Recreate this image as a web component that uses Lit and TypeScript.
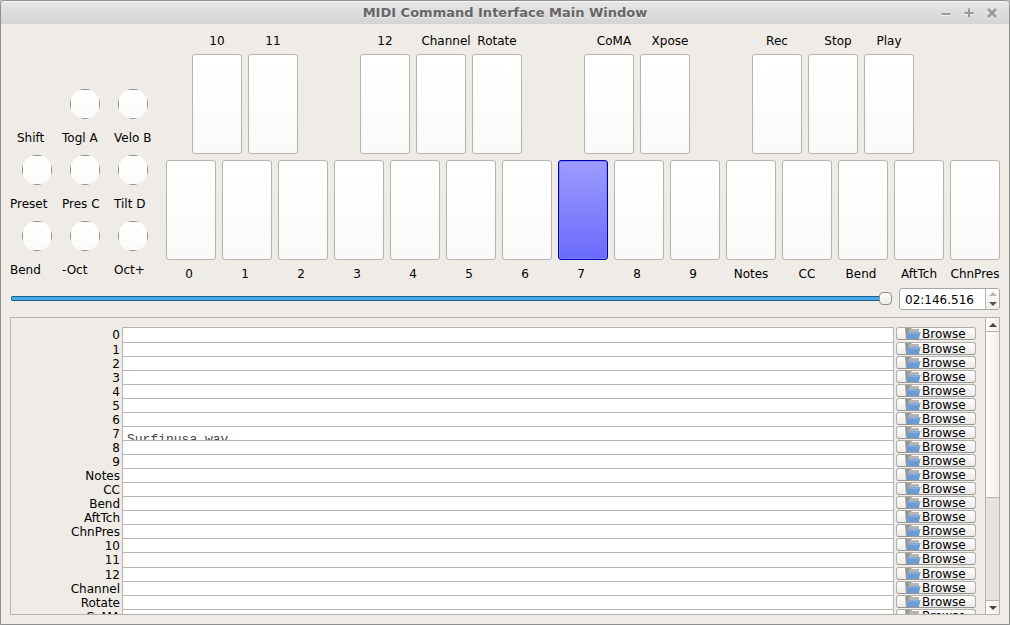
import { LitElement, html, svg, css } from "lit";
import { customElement, property, state } from "lit/decorators.js";
import { classMap } from "lit/directives/class-map.js";

interface Key {
  name: string;
  column: number;
  lean?: "left" | "right";
}

const UPPER_KEYS: Key[] = [
  { name: "10", column: 1 },
  { name: "11", column: 2 },
  { name: "12", column: 4 },
  { name: "Channel", column: 5, lean: "right" },
  { name: "Rotate", column: 6 },
  { name: "CoMA", column: 8, lean: "right" },
  { name: "Xpose", column: 9, lean: "right" },
  { name: "Rec", column: 11 },
  { name: "Stop", column: 12, lean: "right" },
  { name: "Play", column: 13 },
];

const LOWER_KEYS: Key[] = [
  ...["0", "1", "2", "3", "4", "5", "6", "7", "8", "9"].map(
    (name, i): Key => ({ name, column: i + 1, lean: "left" })
  ),
  { name: "Notes", column: 11 },
  { name: "CC", column: 12 },
  { name: "Bend", column: 13, lean: "left" },
  { name: "AftTch", column: 14 },
  { name: "ChnPres", column: 15 },
];

const PADS = [
  ["Shift", "Togl A", "Velo B"],
  ["Preset", "Pres C", "Tilt D"],
  ["Bend", "-Oct", "Oct+"],
];

const FILE_ROWS = [...LOWER_KEYS, ...UPPER_KEYS].map((k) => k.name);

const base = css`
  * {
    box-sizing: border-box;
  }
  button,
  input {
    margin: 0;
    padding: 0;
    font: inherit;
    color: inherit;
  }
`;

@customElement("title-bar")
export class TitleBar extends LitElement {
  static styles = [
    base,
    css`
      :host {
        display: grid;
        grid-template-columns: 1fr auto 1fr;
        align-items: center;
        height: 23px;
        border-top: 1px solid #fafafa;
        border-radius: 4px 4px 0 0;
        background: linear-gradient(#e6e6e6, #d4d4d4);
      }
      h1 {
        grid-column: 2;
        margin: 0;
        font-size: 13px;
        line-height: 16px;
        color: #666;
        text-shadow: 0 1px #f4f4f4;
      }
      .controls {
        display: flex;
        justify-content: flex-end;
        gap: 11px;
        padding-right: 11px;
      }
      button {
        width: 12px;
        height: 12px;
        border: 0;
        background: none;
      }
      svg {
        display: block;
        filter: drop-shadow(0 1px #f2f2f2);
      }
      path {
        fill: none;
        stroke: #999;
        stroke-width: 2;
      }
      .close path {
        stroke-width: 2.5;
      }
    `,
  ];

  render() {
    return html`
      <h1>MIDI Command Interface Main Window</h1>
      <div class="controls">
        <button aria-label="Minimize">
          <svg width="12" height="12"><path d="M1.500 7h9" /></svg>
        </button>
        <button aria-label="Maximize">
          <svg width="12" height="12"><path d="M1.500 6h9M6 1.500v9" /></svg>
        </button>
        <button class="close" aria-label="Close">
          <svg width="12" height="12"><path d="M2 2l8 8M10 2l-8 8" /></svg>
        </button>
      </div>
    `;
  }
}

@customElement("pad-bank")
export class PadBank extends LitElement {
  static styles = [
    base,
    css`
      :host {
        display: flex;
        flex-direction: column;
        justify-content: flex-end;
        gap: 9px;
        width: 156px;
      }
      .circles {
        display: grid;
        grid-template-columns: repeat(3, 48px);
        height: 30px;
        padding-left: 12px;
        margin-bottom: 11px;
      }
      .names {
        display: grid;
        grid-template-columns: repeat(3, 52px);
        line-height: 16px;
        white-space: nowrap;
      }
      .indented {
        padding-left: 7px;
      }
      .circle {
        width: 30px;
        height: 30px;
        border: 1px solid #8c8c8a;
        background: linear-gradient(#fff, #fafafa);
        clip-path: circle(15px);
      }
    `,
  ];

  render() {
    return PADS.map(
      (row, r) => html`
        <div class="bank">
          <div class="circles">
            ${row.map((name, c) =>
              name === "Shift"
                ? html`<span></span>`
                : html`<button class="circle" id="pad-${r}-${c}"></button>`
            )}
          </div>
          <div class="names">
            ${row.map((name, c) =>
              name === "Shift"
                ? html`<span class="indented">${name}</span>`
                : html`<label for="pad-${r}-${c}">${name}</label>`
            )}
          </div>
        </div>
      `
    );
  }
}

@customElement("key-board")
export class KeyBoard extends LitElement {
  @property() active = "7";

  static styles = [
    base,
    css`
      :host {
        display: block;
      }
      .row {
        display: grid;
        column-gap: 6px;
      }
      .upper {
        grid-template-columns: repeat(14, minmax(0, 1fr));
        grid-template-rows: 16px 100px;
        row-gap: 5px;
        padding: 0 30px 0 26px;
        margin-bottom: 6px;
      }
      .lower {
        grid-template-columns: repeat(15, minmax(0, 1fr));
        grid-template-rows: 100px 16px;
        row-gap: 6px;
      }
      label {
        display: flex;
        justify-content: center;
        line-height: 16px;
        white-space: nowrap;
      }
      .left {
        padding-right: 4px;
      }
      .right {
        padding-left: 10px;
      }
      .upper label,
      .lower .key {
        grid-row: 1;
      }
      .lower label,
      .upper .key {
        grid-row: 2;
      }
      .key {
        border: 1px solid #b4b3b1;
        border-radius: 3px;
        background: linear-gradient(#fff, #fafafa);
      }
      .key.active {
        border-color: #0000b2;
        background: linear-gradient(#9c9cff, #6a6afc);
        box-shadow: inset 0 0 0 1px #8080fa;
      }
    `,
  ];

  private renderKeys(keys: Key[], row: string) {
    return html`<div class="row ${row}">
      ${keys.map(
        (k) => html`
          <label
            class=${classMap({ left: k.lean === "left", right: k.lean === "right" })}
            for="${row}-${k.name}"
            style="grid-column:${k.column}"
            >${k.name}</label
          >
          <button
            class=${classMap({ key: true, active: k.name === this.active })}
            id="${row}-${k.name}"
            style="grid-column:${k.column}"
            @click=${() => (this.active = k.name)}
          ></button>
        `
      )}
    </div>`;
  }

  render() {
    return html`${this.renderKeys(UPPER_KEYS, "upper")}${this.renderKeys(LOWER_KEYS, "lower")}`;
  }
}

@customElement("position-bar")
export class PositionBar extends LitElement {
  @state() private time = "02:146.516";

  static styles = [
    base,
    css`
      :host {
        display: flex;
        align-items: center;
        gap: 7px;
        padding-left: 1px;
      }
      .slider {
        flex: 1;
        min-width: 0;
        height: 13px;
        margin-bottom: 1px;
        appearance: none;
        background: none;
      }
      .slider::-webkit-slider-runnable-track {
        height: 5px;
        border-radius: 2px;
        background: #46a8e8;
        box-shadow: inset 0 0 0 1px #1d618f;
      }
      .slider::-webkit-slider-thumb {
        appearance: none;
        width: 13px;
        height: 13px;
        margin-top: -4px;
        border: 1px solid #8f8e8c;
        border-radius: 4px;
        background: linear-gradient(#fff, #ececea);
      }
      .spin {
        display: flex;
        width: 101px;
        height: 22px;
        border: 1px solid #a9a8a5;
        border-radius: 3px;
        background: #fff;
        overflow: hidden;
      }
      .time {
        flex: 1;
        min-width: 0;
        padding: 2px 0 0 5px;
        border: 0;
        outline: 0;
        background: none;
      }
      .steps {
        display: grid;
        grid-template-rows: 1fr 1fr;
        width: 14px;
        border-left: 1px solid #b5b4b1;
        background: linear-gradient(#fdfdfd, #efeeec);
      }
      .steps button {
        display: grid;
        place-items: center;
        border: 0;
        background: none;
        color: #555;
      }
      .steps button:disabled {
        color: #b5b5b5;
      }
    `,
  ];

  render() {
    return html`
      <input class="slider" type="range" min="0" max="1000" value="1000" aria-label="Position" />
      <div class="spin">
        <input class="time" type="text" aria-label="Time" .value=${this.time} />
        <div class="steps">
          <button disabled aria-label="Later">
            <svg width="8" height="4"><path d="M0 4L4 0L8 4z" fill="currentColor" /></svg>
          </button>
          <button aria-label="Earlier">
            <svg width="8" height="4"><path d="M0 0L4 4L8 0z" fill="currentColor" /></svg>
          </button>
        </div>
      </div>
    `;
  }
}

const folder = svg`
  <path d="M0 0H16V11H2z" fill="#fff" opacity=".8" />
  <path d="M0 0H6L7 1H14V5L4 11H1z" fill="#969694" />
  <path d="M4 1H14V4H4z" fill="#b4b4b2" />
  <path d="M3 4H15.500L14 11H2z" fill="#6b9bd2" />
  <path d="M3 4H15.500L15 6H2.800z" fill="#82abdb" />
`;

@customElement("file-list")
export class FileList extends LitElement {
  @property({ attribute: false }) files: Record<string, string> = { "7": "Surfinusa.wav" };

  static styles = [
    base,
    css`
      :host {
        display: flex;
        min-height: 0;
        border: 1px solid #b4b3b0;
      }
      .viewport {
        flex: 1;
        min-width: 0;
        padding: 9px 9px 0 0;
        overflow: hidden;
      }
      .row {
        display: grid;
        grid-template-columns: 109px minmax(0, 1fr) 80px;
        column-gap: 2px;
        height: 14px;
      }
      .row:nth-child(16n + 1) {
        height: 15px;
      }
      label {
        line-height: 16px;
        text-align: right;
        white-space: nowrap;
      }
      .path {
        display: block;
        width: 100%;
        height: 100%;
        padding: 5px 4px 0;
        border: 1px solid #b4b3b0;
        border-bottom: 0;
        border-radius: 0;
        outline: 0;
        background: #fff;
        color: #444;
        font: 13px/16px "Liberation Mono", monospace;
        resize: none;
        overflow: hidden;
      }
      .browse {
        display: flex;
        align-items: center;
        height: 13px;
        padding-left: 8px;
        border: 1px solid #b0afac;
        border-bottom-color: #989794;
        border-radius: 3px;
        background: linear-gradient(#fff, #ebeae8);
        line-height: 12px;
        overflow: hidden;
      }
      .browse svg {
        flex: none;
      }
      .bar {
        display: flex;
        flex-direction: column;
        width: 14px;
        border-left: 1px solid #b4b3b0;
        background: #e4e2df;
      }
      .bar button {
        display: grid;
        place-items: center;
        height: 14px;
        border: 0 solid #b4b3b0;
        background: linear-gradient(90deg, #fdfdfd, #efeeec);
        color: #444;
      }
      .bar .up {
        border-bottom-width: 1px;
      }
      .bar .down {
        border-top-width: 1px;
      }
      .trough {
        flex: 1;
      }
      .thumb {
        height: 62%;
        border-bottom: 1px solid #b4b3b0;
        background: linear-gradient(90deg, #fff, #f0efed);
      }
    `,
  ];

  render() {
    return html`
      <div class="viewport">
        ${FILE_ROWS.map(
          (name, i) => html`
            <div class="row">
              <label for="file-${i}">${name}</label>
              <textarea class="path" id="file-${i}" rows="1" .value=${this.files[name] ?? ""}></textarea>
              <button class="browse"><svg width="17" height="11">${folder}</svg>Browse</button>
            </div>
          `
        )}
      </div>
      <div class="bar">
        <button class="up" aria-label="Scroll up">
          <svg width="8" height="4"><path d="M0 4L4 0L8 4z" fill="currentColor" /></svg>
        </button>
        <div class="trough"><div class="thumb"></div></div>
        <button class="down" aria-label="Scroll down">
          <svg width="8" height="4"><path d="M0 0L4 4L8 0z" fill="currentColor" /></svg>
        </button>
      </div>
    `;
  }
}

@customElement("app-root")
export class AppRoot extends LitElement {
  static styles = [
    base,
    css`
      :host {
        display: block;
        height: 100vh;
        background: #b8b8b8;
        font: 12px/16px "DejaVu Sans", sans-serif;
        color: #000;
      }
      .window {
        display: flex;
        flex-direction: column;
        height: 100%;
        border: 1px solid #8f8f8f;
        border-radius: 5px 5px 0 0;
        background: #efebe7;
      }
      main {
        flex: 1;
        display: flex;
        flex-direction: column;
        min-height: 0;
        padding: 9px;
      }
      .surface {
        display: flex;
      }
      key-board {
        flex: 1;
        min-width: 0;
      }
      pad-bank {
        padding-bottom: 4px;
      }
      position-bar {
        margin: 6px 0 7px;
      }
      file-list {
        flex: 1;
      }
    `,
  ];

  render() {
    return html`
      <div class="window">
        <title-bar></title-bar>
        <main>
          <div class="surface">
            <pad-bank></pad-bank>
            <key-board></key-board>
          </div>
          <position-bar></position-bar>
          <file-list></file-list>
        </main>
      </div>
    `;
  }
}
